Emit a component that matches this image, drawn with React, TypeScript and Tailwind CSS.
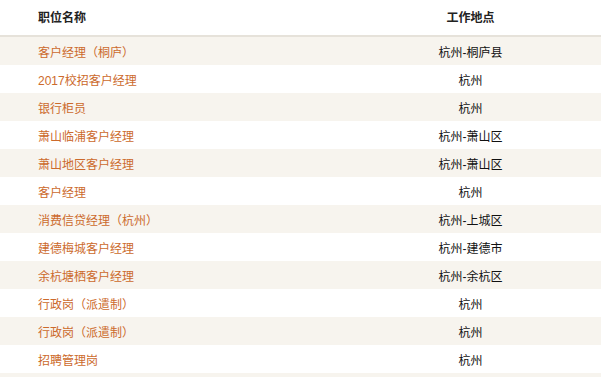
import React from 'react';

const jobs: { name: string; place: string }[] = [
    { name: '客户经理（桐庐）', place: '杭州-桐庐县' },
    { name: '2017校招客户经理', place: '杭州' },
    { name: '银行柜员', place: '杭州' },
    { name: '萧山临浦客户经理', place: '杭州-萧山区' },
    { name: '萧山地区客户经理', place: '杭州-萧山区' },
    { name: '客户经理', place: '杭州' },
    { name: '消费信贷经理（杭州）', place: '杭州-上城区' },
    { name: '建德梅城客户经理', place: '杭州-建德市' },
    { name: '余杭塘栖客户经理', place: '杭州-余杭区' },
    { name: '行政岗（派遣制）', place: '杭州' },
    { name: '行政岗（派遣制）', place: '杭州' },
    { name: '招聘管理岗', place: '杭州' },
    { name: '', place: '' },
];

const App: React.FC = () => {
    return (
        <div
            className="w-[601px] h-[377px] overflow-hidden bg-white text-[12px]"
            style={{ fontFamily: '"Liberation Sans", "Noto Sans CJK SC", sans-serif' }}
        >
            <div className="flex h-[37px] items-center border-b-2 border-[#e6e2da] pt-[1px] font-bold text-[#222]">
                <div className="w-[340px] pl-[38px]">职位名称</div>
                <div className="flex-1 text-center">工作地点</div>
            </div>
            {jobs.map((job, i) => (
                <div
                    key={i}
                    className={`flex h-[28px] items-center pt-[4px] ${i % 2 === 0 ? 'bg-[#f7f4ee]' : 'bg-white'}`}
                >
                    <div className="w-[340px] pl-[38px] text-[#cc6a2c]">{job.name}</div>
                    <div className="flex-1 text-center text-[#111]">{job.place}</div>
                </div>
            ))}
        </div>
    );
};

export default App;
